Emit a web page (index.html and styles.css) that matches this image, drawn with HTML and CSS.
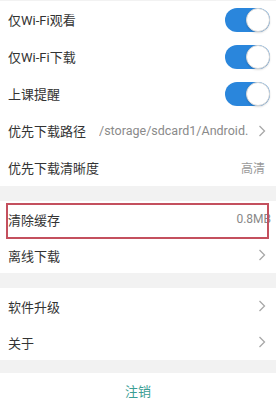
FILE: index.html
```html
<!DOCTYPE html>
<html lang="zh-CN">
<head>
<meta charset="utf-8">
<link rel="stylesheet" href="styles.css">
</head>
<body>
<div class="page">
  <section class="group group-first">
    <div class="row tall"><span class="label">仅Wi-Fi观看</span><span class="switch"><span class="knob"></span></span></div>
    <div class="row tall"><span class="label">仅Wi-Fi下载</span><span class="switch"><span class="knob"></span></span></div>
    <div class="row tall"><span class="label">上课提醒</span><span class="switch"><span class="knob"></span></span></div>
    <div class="row tall"><span class="label">优先下载路径</span><span class="path">/storage/sdcard1/Android.</span><svg class="chev" width="8" height="12" viewBox="0 0 8 12"><polyline points="1.5,1 6.5,6 1.5,11" fill="none" stroke="#a8a8a8" stroke-width="1.3"/></svg></div>
    <div class="row tall"><span class="label">优先下载清晰度</span><span class="value value-q">高清</span></div>
  </section>
  <section class="group">
    <div class="row highlighted"><span class="label">清除缓存</span><span class="value value-mb">0.8MB</span><span class="mark"></span></div>
    <div class="row"><span class="label">离线下载</span><svg class="chev" width="8" height="12" viewBox="0 0 8 12"><polyline points="1.5,1 6.5,6 1.5,11" fill="none" stroke="#a8a8a8" stroke-width="1.3"/></svg></div>
  </section>
  <section class="group">
    <div class="row"><span class="label">软件升级</span><svg class="chev" width="8" height="12" viewBox="0 0 8 12"><polyline points="1.5,1 6.5,6 1.5,11" fill="none" stroke="#a8a8a8" stroke-width="1.3"/></svg></div>
    <div class="row"><span class="label">关于</span><svg class="chev" width="8" height="12" viewBox="0 0 8 12"><polyline points="1.5,1 6.5,6 1.5,11" fill="none" stroke="#a8a8a8" stroke-width="1.3"/></svg></div>
  </section>
  <div class="logout">注销</div>
</div>
</body>
</html>
```
FILE: styles.css
```css
html, body {
  margin: 0;
  padding: 0;
  background: #f2f2f2;
  font-family: Roboto, "Noto Sans CJK SC", sans-serif;
  color: #333;
}
.page {
  width: 276px;
  height: 404px;
  overflow: hidden;
  display: flex;
  flex-direction: column;
}
.group {
  background: #fff;
  margin-top: 15px;
}
.group-first {
  margin-top: 1px;
}
.row {
  position: relative;
  height: 36px;
  display: flex;
  align-items: center;
  padding: 0 10px 0 8px;
  font-size: 13px;
}
.row.tall {
  height: 37px;
}
.label {
  flex: none;
  color: #333;
}
.switch {
  margin-left: auto;
  margin-right: -4px;
  width: 45px;
  height: 24px;
  border-radius: 12px;
  background: #2a86dc;
  display: flex;
  justify-content: flex-end;
  box-sizing: border-box;
}
.knob {
  width: 24px;
  height: 24px;
  border-radius: 50%;
  background: #fff;
  box-sizing: border-box;
  border: 1px solid #d6d6d6;
  box-shadow: 0 1px 2px rgba(0,0,0,0.15);
}
.path {
  flex: 1;
  margin-left: 13px;
  margin-right: 5px;
  font-size: 12.5px;
  color: #8a8a8a;
  white-space: nowrap;
  overflow: hidden;
}
.chev {
  margin-left: auto;
  flex: none;
}
.value {
  margin-left: auto;
  font-size: 12px;
  color: #9a9a9a;
}
.value-q {
  margin-right: 1px;
}
.value-mb {
  margin-right: -5px;
  color: #888;
}
.mark {
  position: absolute;
  left: 6px;
  right: 7px;
  top: 2px;
  height: 36px;
  border: 2px solid #c4505e;
  box-sizing: border-box;
  pointer-events: none;
}
.logout {
  margin-top: 13px;
  flex: 1;
  background: #fff;
  display: flex;
  justify-content: center;
  padding-top: 8px;
  font-size: 13px;
  color: #3a9e94;
}
```
